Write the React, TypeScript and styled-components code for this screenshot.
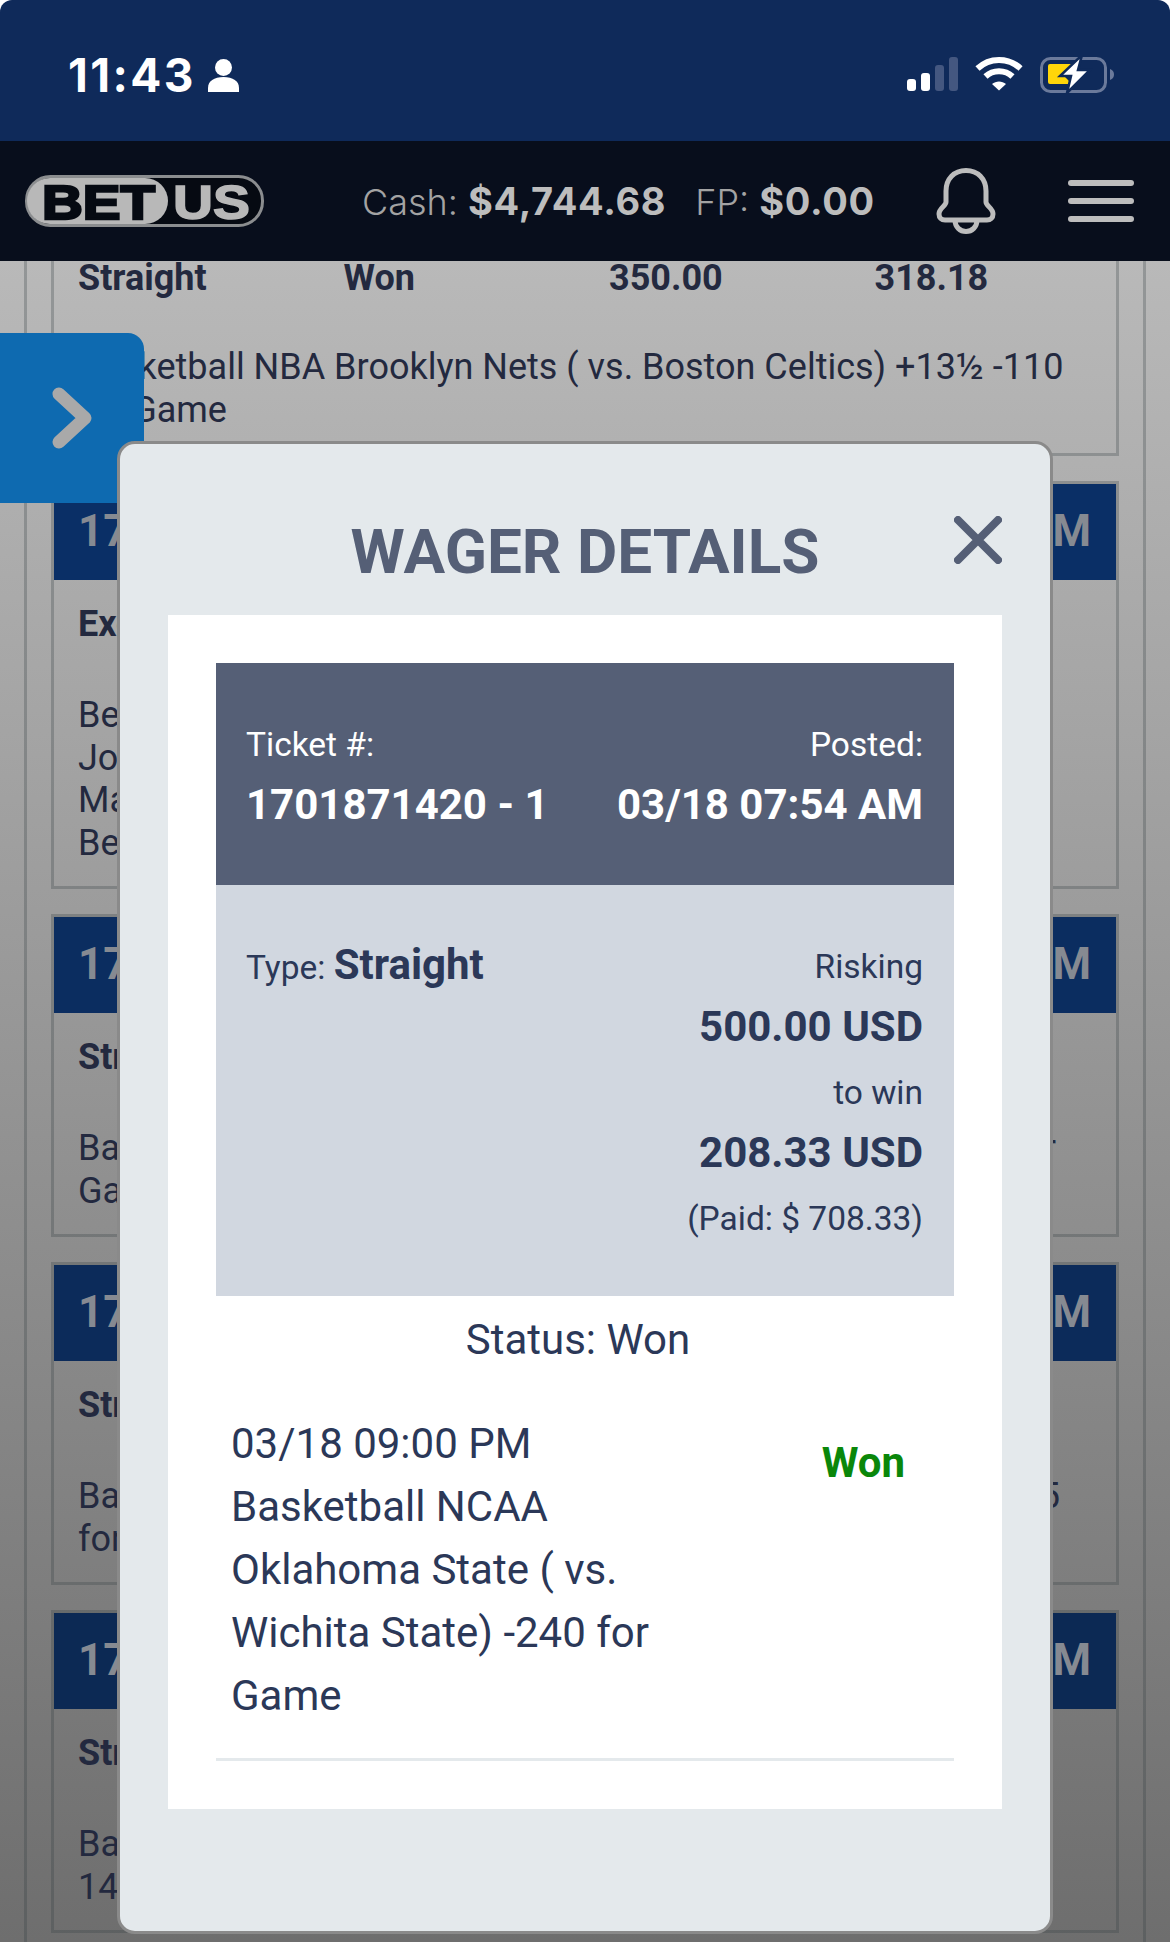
import styled, { createGlobalStyle } from 'styled-components';

const GlobalStyle = createGlobalStyle`
  html, body {
    margin: 0;
    padding: 0;
    background: #fff;
  }
  * {
    box-sizing: border-box;
  }
`;

const Screen = styled.div`
  position: relative;
  width: 1170px;
  height: 1942px;
  overflow: hidden;
  display: flex;
  flex-direction: column;
  font-family: Roboto, 'Liberation Sans', sans-serif;
  background: #fff;
`;

const StatusBar = styled.div`
  height: 141px;
  flex-shrink: 0;
  background: #0f2a5a;
  border-radius: 12px 12px 0 0;
  padding: 50px 55px 0 68px;
  display: flex;
  justify-content: space-between;
  align-items: flex-start;
  color: #fff;
`;

const Clock = styled.div`
  display: flex;
  align-items: center;
  gap: 12px;
  font-family: Inter, sans-serif;
  font-weight: 700;
  font-size: 46px;
  letter-spacing: 2.4px;
  line-height: 50px;
`;

const StatusIcons = styled.div`
  display: flex;
  align-items: flex-start;
  gap: 17px;
  margin-top: 5px;

  svg:first-child {
    margin-top: 2px;
  }
`;

const TopBar = styled.header`
  position: relative;
  z-index: 1;
  height: 120px;
  flex-shrink: 0;
  background: #080e1c;
  display: flex;
  align-items: center;
  padding: 0 36px 0 25px;
  color: #bdbdbd;
`;

const Balances = styled.div`
  margin-left: 98px;
  display: flex;
  align-items: baseline;
  font-family: Inter, sans-serif;
`;

const BalanceLabel = styled.span<{ $gap?: number }>`
  font-size: 36px;
  font-weight: 300;
  color: #a3a3a3;
  margin-left: ${(p) => p.$gap ?? 0}px;
`;

const BalanceValue = styled.span`
  font-size: 38px;
  letter-spacing: 0.7px;
  font-weight: 700;
  margin-left: 10px;
`;

const BarIcons = styled.div`
  margin-left: auto;
  display: flex;
  align-items: center;
  gap: 72px;
`;

const Feed = styled.div`
  flex: 1;
  min-height: 0;
  display: flex;
  background: linear-gradient(180deg, #b9b9b9 0%, #6e6e6e 100%);
`;

const List = styled.main`
  flex: 1;
  min-width: 0;
  margin: 0 24px;
  padding: 0 24px;
  border-left: 3px solid rgba(50, 60, 65, 0.28);
  border-right: 3px solid rgba(50, 60, 65, 0.28);
  display: flex;
  flex-direction: column;
  gap: 25px;
  color: #23293f;
`;

const Card = styled.section`
  flex-shrink: 0;
  border: 3px solid rgba(50, 60, 65, 0.28);
`;

const FirstCard = styled(Card)`
  border-top: 0;
  margin-top: -4px;
  height: 199px;
`;

const CardHeader = styled.div<{ $shade: string }>`
  height: 96px;
  background: ${(p) => p.$shade};
  display: flex;
  justify-content: space-between;
  align-items: center;
  padding: 0 25px 2px 24px;
  font-size: 44px;
  font-weight: 700;
  color: #868a92;
`;

const CardRow = styled.div<{ $compact?: boolean }>`
  display: grid;
  grid-template-columns: repeat(3, 265.5px) 1fr;
  padding: ${(p) => (p.$compact ? '0' : '23px')} 24px 0;
  font-size: 36px;
  line-height: 42px;
  font-weight: 700;
`;

const CardText = styled.div<{ $top: number }>`
  padding: ${(p) => p.$top}px 24px 22px;
  font-size: 36px;
  line-height: 42.5px;
  white-space: nowrap;
`;

const CardLine = styled.div<{ $fit?: number }>`
  ${(p) =>
    p.$fit
      ? `width: ${p.$fit}px;
         white-space: normal;
         text-align-last: justify;`
      : ''}
`;

const SideTab = styled.div`
  position: absolute;
  left: 0;
  top: 333px;
  width: 144px;
  height: 170px;
  background: #0e6ab0;
  border-radius: 0 16px 0 0;
  display: flex;
  align-items: center;
  justify-content: center;
`;

const Modal = styled.div`
  position: absolute;
  left: 117px;
  top: 441px;
  width: 936px;
  height: 1493px;
  background: #e4e9ec;
  border: 3px solid #8a8a8a;
  border-radius: 18px;
  padding: 0 48px;
`;

const ModalTitle = styled.h2`
  margin: 0;
  height: 171px;
  padding-top: 74px;
  text-align: center;
  font-size: 62px;
  line-height: 68px;
  font-weight: 700;
  color: #555f76;
`;

const CloseButton = styled.div`
  position: absolute;
  right: 48px;
  top: 72px;
  width: 48px;
  height: 48px;
`;

const Panel = styled.div`
  height: 1194px;
  background: #fff;
  padding: 48px 48px 0;
  color: #2b3858;
`;

const TicketHead = styled.div`
  height: 222px;
  background: #555f76;
  color: #fff;
  padding: 60px 31px 0 30px;
  display: flex;
  justify-content: space-between;
`;

const HeadColumn = styled.div<{ $right?: boolean }>`
  text-align: ${(p) => (p.$right ? 'right' : 'left')};
`;

const HeadLabel = styled.div`
  font-size: 33.5px;
  line-height: 44px;
`;

const HeadValue = styled.div`
  margin-top: 16px;
  font-size: 42px;
  line-height: 44px;
  font-weight: 700;
`;

const TicketBody = styled.div`
  height: 411px;
  background: #d1d7e0;
  padding: 60px 31px 0 30px;
  display: flex;
  justify-content: space-between;
`;

const TypeLine = styled.div`
  font-size: 33.5px;
  line-height: 48px;
  margin-top: -4px;
`;

const TypeValue = styled.strong`
  font-size: 42px;
  font-weight: 700;
`;

const Amounts = styled.div`
  text-align: right;
  font-size: 33.5px;
`;

const AmountLabel = styled.div`
  line-height: 44px;
  margin-bottom: 16px;
`;

const AmountValue = styled.div`
  font-size: 42px;
  font-weight: 700;
  line-height: 44px;
  margin-bottom: 22px;
`;

const Status = styled.div`
  margin-top: 20px;
  text-align: center;
  padding-right: 14px;
  font-size: 42px;
  line-height: 48px;
`;

const Selection = styled.div`
  margin-top: 48px;
  padding: 0 49px 0 15px;
  border-bottom: 3px solid #e4e9ec;
  display: flex;
  justify-content: space-between;
  align-items: flex-start;
  height: 349px;
`;

const SelectionText = styled.div`
  width: 440px;
  font-size: 42px;
  line-height: 63px;
  white-space: nowrap;
`;

const Result = styled.div`
  margin-top: 19px;
  font-size: 42px;
  line-height: 63px;
  font-weight: 700;
  color: #0a870a;
`;

const Logo = () => (
  <svg width="239" height="52" viewBox="0 0 239 52" overflow="visible">
    <rect x="1.500" y="1.500" width="236" height="49" rx="24" fill="#060a12" stroke="#8b8d8f" strokeWidth="3" />
    <path d="M25 3H120a23 23 0 0 1 0 46H25a23 23 0 0 1 0-46Z" fill="#b8b8b8" />
    <text x="17" y="44" textLength="113" lengthAdjust="spacingAndGlyphs" fontFamily="Liberation Sans, sans-serif" fontWeight="700" fontSize="49" stroke="#060a12" strokeWidth="2.500" fill="#060a12">BET</text>
    <text x="148" y="44" textLength="77" lengthAdjust="spacingAndGlyphs" fontFamily="Liberation Sans, sans-serif" fontWeight="700" fontSize="49" stroke="#b8b8b8" strokeWidth="1.500" fill="#b8b8b8">US</text>
  </svg>
);

const Person = () => (
  <svg width="31" height="33" viewBox="0 0 31 33" fill="#fff">
    <circle cx="15.500" cy="8.500" r="8.500" />
    <path d="M0 33v-4c0-7 6-11 15.500-11S31 22 31 29v4Z" />
  </svg>
);

const Signal = () => (
  <svg width="51" height="34" viewBox="0 0 51 34">
    <rect x="0" y="22" width="9" height="12" rx="3" fill="#fff" />
    <rect x="14" y="16" width="9" height="18" rx="3" fill="#fff" />
    <rect x="28" y="8" width="9" height="26" rx="3" fill="#445780" />
    <rect x="42" y="0" width="9" height="34" rx="3" fill="#445780" />
  </svg>
);

const Wifi = () => (
  <svg width="48" height="36" viewBox="0 0 48 36" fill="none" stroke="#fff" strokeWidth="6">
    <path d="M2.500 13.500C14.500 2 33.500 2 45.500 13.500" />
    <path d="M10.500 21.500C18 14.500 30 14.500 37.500 21.500" />
    <path d="M17 29C21 25.600 27 25.600 31 29L24 35.500Z" fill="#fff" stroke="none" />
  </svg>
);

const Battery = () => (
  <svg width="75" height="38" viewBox="0 0 75 38">
    <rect x="1.500" y="3.500" width="64" height="33" rx="9" fill="none" stroke="#6b7a9b" strokeWidth="3" />
    <path d="M70 14c3 1 4 3 4 5.500s-1 4.500-4 5.500Z" fill="#6b7a9b" />
    <path d="M8 11a2 2 0 0 1 2-2h26L24 21l8 8H10a2 2 0 0 1-2-2Z" fill="#ffd60a" />
    <path d="M42 0 20 21h11l-4 17 23-23H38Z" fill="#fff" stroke="#0f2a5a" strokeWidth="2.500" />
  </svg>
);

const Bell = () => (
  <svg width="60" height="66" viewBox="0 0 60 66" fill="none" stroke="#bdbdbd" strokeWidth="5" strokeLinejoin="round">
    <path d="M30 2.500C18 2.500 10 11 10 23v11c0 4-7 6-7 12 0 4 2.500 6 6 6h42c3.500 0 6-2 6-6 0-6-7-8-7-12V23C50 11 42 2.500 30 2.500Z" />
    <path d="M19 52c0 7 5 11.500 11 11.500S41 59 41 52" />
  </svg>
);

const Menu = () => (
  <svg width="66" height="42" viewBox="0 0 66 42" fill="#bdbdbd">
    <rect y="0" width="66" height="6" rx="3" />
    <rect y="18" width="66" height="6" rx="3" />
    <rect y="36" width="66" height="6" rx="3" />
  </svg>
);

interface WagerLine {
  text: string;
  fit?: number;
}

const cards: { id: string; shade: string; type: string; lines: WagerLine[] }[] = [
  {
    id: '1701871419 - 1',
    shade: '#0a2f66',
    type: 'Exotic',
    lines: [
      { text: 'Best Bet Boston Celtics vs. Brooklyn Nets' },
      { text: 'Joe Harris total points over 9½ -110' },
      { text: 'Mark Williams total points over 9½ -110' },
      { text: 'Ben Simmons total points over 4½ -110' },
    ],
  },
  {
    id: '1701871421 - 1',
    shade: '#0b2d60',
    type: 'Straight',
    lines: [
      { text: 'Basketball NBA Chicago Bulls ( vs. Utah Jazz) -1½ -110 for', fit: 978 },
      { text: 'Game' },
    ],
  },
  {
    id: '1701871422 - 1',
    shade: '#0c2b5a',
    type: 'Straight',
    lines: [
      { text: 'Basketball NCAA Texas ( vs. Penn State Lions) +11½ -115', fit: 982 },
      { text: 'for Game' },
    ],
  },
  {
    id: '1701871423 - 1',
    shade: '#0c2954',
    type: 'Straight',
    lines: [
      { text: 'Basketball NBA Phoenix Suns ( vs. Detroit Pistons) Over' },
      { text: '148½ -110 for Game' },
    ],
  },
];

export default function App() {
  return (
    <>
      <GlobalStyle />
      <Screen>
        <StatusBar>
          <Clock>
            11:43
            <Person />
          </Clock>
          <StatusIcons>
            <Signal />
            <Wifi />
            <Battery />
          </StatusIcons>
        </StatusBar>
        <TopBar>
          <Logo />
          <Balances>
            <BalanceLabel>Cash:</BalanceLabel>
            <BalanceValue>$4,744.68</BalanceValue>
            <BalanceLabel $gap={29}>FP:</BalanceLabel>
            <BalanceValue>$0.00</BalanceValue>
          </Balances>
          <BarIcons>
            <Bell />
            <Menu />
          </BarIcons>
        </TopBar>
        <Feed>
          <List>
            <FirstCard>
              <CardRow $compact>
                <span>Straight</span>
                <span>Won</span>
                <span>350.00</span>
                <span>318.18</span>
              </CardRow>
              <CardText $top={47}>
                <CardLine>Basketball NBA Brooklyn Nets ( vs. Boston Celtics) +13½ -110</CardLine>
                <CardLine>for Game</CardLine>
              </CardText>
            </FirstCard>
            {cards.map((card) => (
              <Card key={card.id}>
                <CardHeader $shade={card.shade}>
                  <span>{card.id}</span>
                  <span>03/18 07:54 AM</span>
                </CardHeader>
                <CardRow>
                  <span>{card.type}</span>
                </CardRow>
                <CardText $top={49}>
                  {card.lines.map((line) => (
                    <CardLine key={line.text} $fit={line.fit}>
                      {line.text}
                    </CardLine>
                  ))}
                </CardText>
              </Card>
            ))}
          </List>
        </Feed>
        <SideTab>
          <svg width="40" height="62" viewBox="0 0 40 62" fill="none" stroke="#a9a9a9" strokeWidth="13" strokeLinecap="round" strokeLinejoin="round">
            <path d="M7 7 33 31 7 55" />
          </svg>
        </SideTab>
        <Modal>
          <ModalTitle>WAGER DETAILS</ModalTitle>
          <CloseButton>
            <svg width="48" height="48" viewBox="0 0 48 48" stroke="#555f76" strokeWidth="8" strokeLinecap="round">
              <path d="M4 4 44 44M44 4 4 44" />
            </svg>
          </CloseButton>
          <Panel>
            <TicketHead>
              <HeadColumn>
                <HeadLabel>Ticket #:</HeadLabel>
                <HeadValue>1701871420 - 1</HeadValue>
              </HeadColumn>
              <HeadColumn $right>
                <HeadLabel>Posted:</HeadLabel>
                <HeadValue>03/18 07:54 AM</HeadValue>
              </HeadColumn>
            </TicketHead>
            <TicketBody>
              <TypeLine>
                Type: <TypeValue>Straight</TypeValue>
              </TypeLine>
              <Amounts>
                <AmountLabel>Risking</AmountLabel>
                <AmountValue>500.00 USD</AmountValue>
                <AmountLabel>to win</AmountLabel>
                <AmountValue>208.33 USD</AmountValue>
                <AmountLabel>(Paid: $ 708.33)</AmountLabel>
              </Amounts>
            </TicketBody>
            <Status>Status: Won</Status>
            <Selection>
              <SelectionText>
                03/18 09:00 PM
                <br />
                Basketball NCAA
                <br />
                Oklahoma State ( vs.
                <br />
                Wichita State) -240 for
                <br />
                Game
              </SelectionText>
              <Result>Won</Result>
            </Selection>
          </Panel>
        </Modal>
      </Screen>
    </>
  );
}
